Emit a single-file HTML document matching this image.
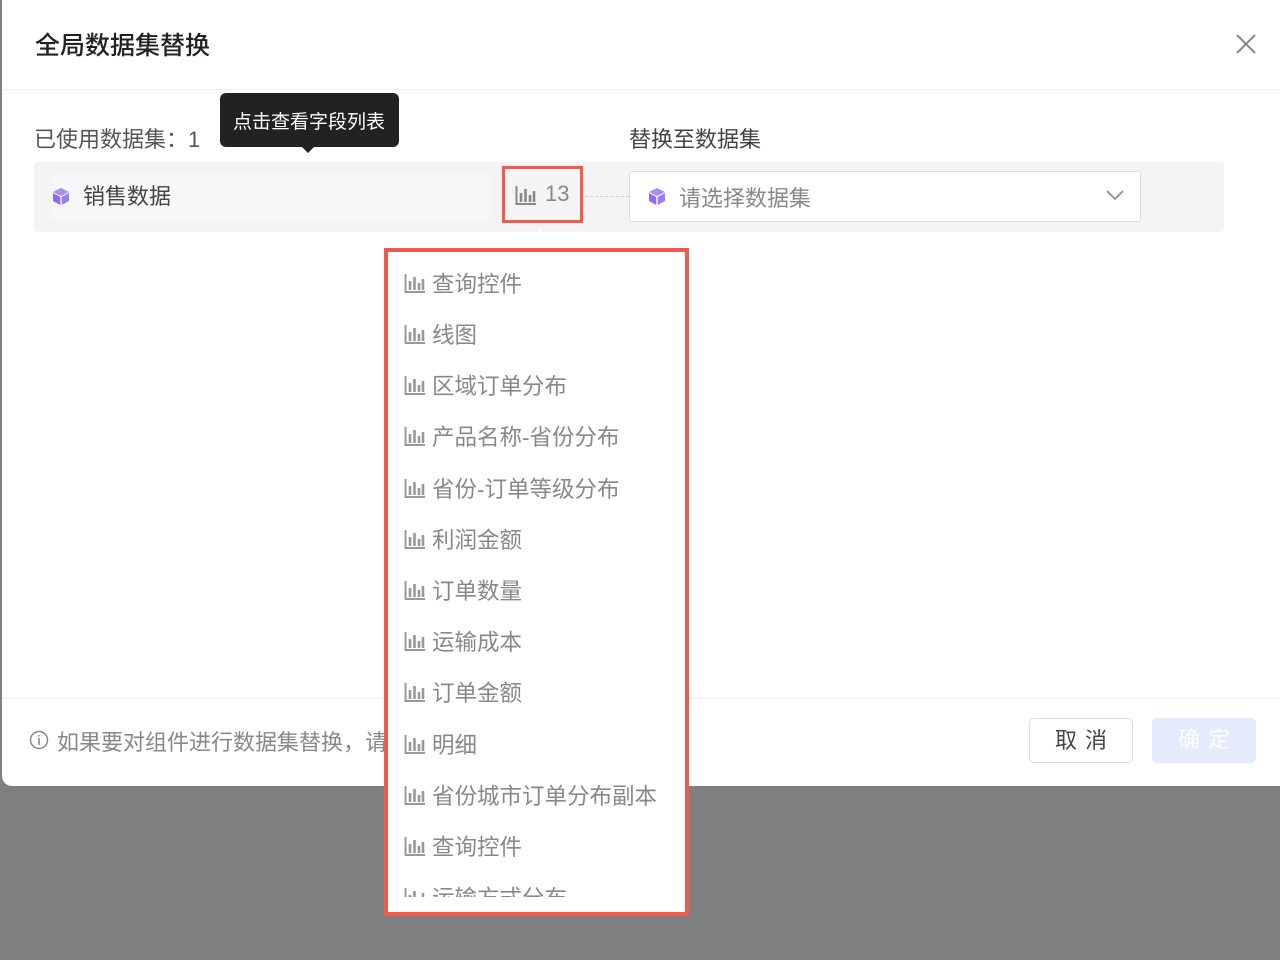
<!DOCTYPE html>
<html><head><meta charset="utf-8"><style>
*{box-sizing:border-box;margin:0;padding:0}
body{width:1280px;height:960px;background:#7f8082;position:relative;overflow:hidden;font-family:"Liberation Sans","Noto Sans CJK SC",sans-serif}
.modal{position:absolute;left:2px;top:0;width:1290px;height:786px;background:#fff;border-radius:0 0 10px 10px}
.title{position:absolute;left:33px;top:26px;font-size:25px;color:#222;font-weight:500}
.close{position:absolute;left:1233px;top:33px}
.hr{position:absolute;left:0;right:0;height:1px;background:#eee}
.t{position:absolute;font-size:22px;color:#555;white-space:nowrap}
.row{position:absolute;left:32px;top:162px;width:1190px;height:70px;background:#f4f4f4;border-radius:4px}
.inner{position:absolute;left:17px;top:12px;width:440px;height:46px;background:#f7f7f7}
.sel{position:absolute;left:627px;top:171px;width:512px;height:51px;background:#fff;border:1px solid #ddd;border-radius:3px}
.tip{position:absolute;left:220px;top:93px;width:179px;height:54px;background:#222;border-radius:6px;color:#fff;font-size:19px;padding:14px 0 0 13px}
.tip:after{content:"";position:absolute;left:81px;bottom:-6px;border:7px solid transparent;border-top:7px solid #222;border-bottom:0}
.red1{position:absolute;left:502px;top:166px;width:81px;height:57px;border:3px solid #f15a4d}
.dd{position:absolute;left:384px;top:248px;width:305px;height:668px;background:#fff;border:4px solid #f15a4d}
.clip{position:absolute;left:0;top:0;right:0;height:645px;overflow:hidden}
.item{position:absolute;left:16px;font-size:22.5px;color:#888;white-space:nowrap;display:flex;align-items:center;gap:6px}
.btn{position:absolute;top:718px;width:104px;height:45px;border-radius:5px;font-size:22px;text-align:center;line-height:43px;letter-spacing:8px;padding-left:8px}
</style></head><body>
<div class="modal">
<div class="title">全局数据集替换</div>
<svg class="close" width="22" height="22" viewBox="0 0 22 22"><path d="M2 2L20 20M20 2L2 20" stroke="#888" stroke-width="2"/></svg>
<div class="hr" style="top:89px"></div>
<div class="t" style="left:32px;top:122px">已使用数据集：1</div>
<div class="t" style="left:627px;top:122px;color:#444">替换至数据集</div>
<div class="row"><div class="inner"></div></div>
<svg style="position:absolute;left:49px;top:186px" width="20" height="20" viewBox="0 0 20 20"><path d="M10 2L18 6L10 10L2 6Z" fill="#a98cf7"/><path d="M2 7L9.3 11V19L2 15Z" fill="#8b6cf0"/><path d="M18 7L10.7 11V19L18 15Z" fill="#9b7ef4"/></svg>
<div class="t" style="left:81px;top:179px;color:#444">销售数据</div>
<svg style="position:absolute;left:513px;top:184px" width="22" height="22" viewBox="0 0 22 22"><path d="M1.5 2V20H21" stroke="#888" stroke-width="2" fill="none"/><path d="M6 9V18M10.5 5V18M15 11V18M19 7V18" stroke="#888" stroke-width="2.6"/></svg>
<div class="t" style="left:543px;top:181px;color:#888">13</div>
<div style="position:absolute;left:583px;top:196px;width:44px;border-top:1px dashed #ccc"></div>
<div class="sel"></div>
<svg style="position:absolute;left:645px;top:186px" width="20" height="20" viewBox="0 0 20 20"><path d="M10 2L18 6L10 10L2 6Z" fill="#a98cf7"/><path d="M2 7L9.3 11V19L2 15Z" fill="#8b6cf0"/><path d="M18 7L10.7 11V19L18 15Z" fill="#9b7ef4"/></svg>
<div class="t" style="left:677px;top:181px;color:#888">请选择数据集</div>
<svg style="position:absolute;left:1104px;top:188px" width="18" height="14" viewBox="0 0 18 14"><path d="M1 3L9 11L17 3" stroke="#888" stroke-width="1.6" fill="none"/></svg>
<div class="hr" style="top:698px"></div>
<svg style="position:absolute;left:27px;top:730px" width="20" height="20" viewBox="0 0 20 20"><circle cx="10" cy="10" r="8.5" stroke="#888" stroke-width="1.5" fill="none"/><path d="M10 8V15M10 5V6.5" stroke="#888" stroke-width="1.6"/></svg>
<div class="t" style="left:55px;top:725px;color:#888">如果要对组件进行数据集替换，请</div>
<div class="btn" style="left:1027px;border:1px solid #ddd;color:#444">取消</div>
<div class="btn" style="left:1150px;background:#e3ebfc;color:#fff">确定</div>
</div>
<div class="tip">点击查看字段列表</div>
<div class="red1"></div>
<div style="position:absolute;left:530px;top:230px;border:10px solid transparent;border-bottom:10px solid #fff;border-top:0"></div>
<div class="dd"><div class="clip">
<div class="item" style="top:15px"><svg width="22" height="22" viewBox="0 0 22 22"><path d="M1.5 2V20H21" stroke="#999" stroke-width="2" fill="none"/><path d="M6 9V18M10.5 5V18M15 11V18M19 7V18" stroke="#999" stroke-width="2.6"/></svg>查询控件</div>
<div class="item" style="top:66px"><svg width="22" height="22" viewBox="0 0 22 22"><path d="M1.5 2V20H21" stroke="#999" stroke-width="2" fill="none"/><path d="M6 9V18M10.5 5V18M15 11V18M19 7V18" stroke="#999" stroke-width="2.6"/></svg>线图</div>
<div class="item" style="top:117px"><svg width="22" height="22" viewBox="0 0 22 22"><path d="M1.5 2V20H21" stroke="#999" stroke-width="2" fill="none"/><path d="M6 9V18M10.5 5V18M15 11V18M19 7V18" stroke="#999" stroke-width="2.6"/></svg>区域订单分布</div>
<div class="item" style="top:168px"><svg width="22" height="22" viewBox="0 0 22 22"><path d="M1.5 2V20H21" stroke="#999" stroke-width="2" fill="none"/><path d="M6 9V18M10.5 5V18M15 11V18M19 7V18" stroke="#999" stroke-width="2.6"/></svg>产品名称-省份分布</div>
<div class="item" style="top:220px"><svg width="22" height="22" viewBox="0 0 22 22"><path d="M1.5 2V20H21" stroke="#999" stroke-width="2" fill="none"/><path d="M6 9V18M10.5 5V18M15 11V18M19 7V18" stroke="#999" stroke-width="2.6"/></svg>省份-订单等级分布</div>
<div class="item" style="top:271px"><svg width="22" height="22" viewBox="0 0 22 22"><path d="M1.5 2V20H21" stroke="#999" stroke-width="2" fill="none"/><path d="M6 9V18M10.5 5V18M15 11V18M19 7V18" stroke="#999" stroke-width="2.6"/></svg>利润金额</div>
<div class="item" style="top:322px"><svg width="22" height="22" viewBox="0 0 22 22"><path d="M1.5 2V20H21" stroke="#999" stroke-width="2" fill="none"/><path d="M6 9V18M10.5 5V18M15 11V18M19 7V18" stroke="#999" stroke-width="2.6"/></svg>订单数量</div>
<div class="item" style="top:373px"><svg width="22" height="22" viewBox="0 0 22 22"><path d="M1.5 2V20H21" stroke="#999" stroke-width="2" fill="none"/><path d="M6 9V18M10.5 5V18M15 11V18M19 7V18" stroke="#999" stroke-width="2.6"/></svg>运输成本</div>
<div class="item" style="top:424px"><svg width="22" height="22" viewBox="0 0 22 22"><path d="M1.5 2V20H21" stroke="#999" stroke-width="2" fill="none"/><path d="M6 9V18M10.5 5V18M15 11V18M19 7V18" stroke="#999" stroke-width="2.6"/></svg>订单金额</div>
<div class="item" style="top:476px"><svg width="22" height="22" viewBox="0 0 22 22"><path d="M1.5 2V20H21" stroke="#999" stroke-width="2" fill="none"/><path d="M6 9V18M10.5 5V18M15 11V18M19 7V18" stroke="#999" stroke-width="2.6"/></svg>明细</div>
<div class="item" style="top:527px"><svg width="22" height="22" viewBox="0 0 22 22"><path d="M1.5 2V20H21" stroke="#999" stroke-width="2" fill="none"/><path d="M6 9V18M10.5 5V18M15 11V18M19 7V18" stroke="#999" stroke-width="2.6"/></svg>省份城市订单分布副本</div>
<div class="item" style="top:578px"><svg width="22" height="22" viewBox="0 0 22 22"><path d="M1.5 2V20H21" stroke="#999" stroke-width="2" fill="none"/><path d="M6 9V18M10.5 5V18M15 11V18M19 7V18" stroke="#999" stroke-width="2.6"/></svg>查询控件</div>
<div class="item" style="top:629px"><svg width="22" height="22" viewBox="0 0 22 22"><path d="M1.5 2V20H21" stroke="#999" stroke-width="2" fill="none"/><path d="M6 9V18M10.5 5V18M15 11V18M19 7V18" stroke="#999" stroke-width="2.6"/></svg>运输方式分布</div>
</div></div>
</body></html>
